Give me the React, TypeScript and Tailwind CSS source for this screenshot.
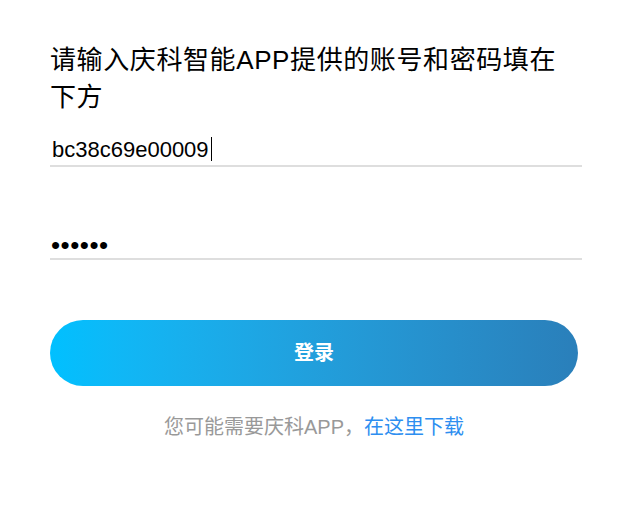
import { useState } from "react";

const App = () => {
  const [account, setAccount] = useState("bc38c69e00009");
  const [password, setPassword] = useState("123456");

  return (
    <div
      className="min-h-screen bg-white pt-[42px] pl-[50px]"
      style={{ fontFamily: '"Liberation Sans", "Noto Sans CJK SC", sans-serif' }}
    >
      <div className="w-[532px]">
        {/* 标题 */}
        <h1 className="w-[512px] text-[26px] leading-[37px] tracking-[0.6px] font-normal text-black">
          请输入庆科智能APP提供的账号和密码填在下方
        </h1>

        {/* 账号 */}
        <div className="mt-[9px] border-b-2 border-[#dedede] flex items-end h-[42px]">
          <span className="pl-[2px] text-[22px] leading-[30px] text-black whitespace-pre">
            {account}
          </span>
          <span className="ml-[2px] mb-[4px] w-[1.5px] h-[24px] bg-black" />
          <input
            type="text"
            value={account}
            onChange={(e) => setAccount(e.target.value)}
            className="hidden"
          />
        </div>

        {/* 密码 */}
        <div className="mt-[51px] border-b-2 border-[#dedede]">
          <input
            type="password"
            value={password}
            onChange={(e) => setPassword(e.target.value)}
            className="block w-full h-[40px] pt-[15px] pl-[1px] text-[26px] tracking-[0.5px] text-black outline-none bg-transparent"
          />
        </div>

        {/* 登录按钮 */}
        <button className="mt-[60px] w-[528px] h-[66px] rounded-full bg-linear-to-r from-[#00c0ff] to-[#2a7fba] text-white text-[20px] font-bold">
          登录
        </button>

        <p className="mt-[27px] w-[528px] text-center text-[20px] leading-[28px] text-[#999999]">
          您可能需要庆科APP，<a className="text-[#2d8ef0]">在这里下载</a>
        </p>
      </div>
    </div>
  );
};

export default App;
